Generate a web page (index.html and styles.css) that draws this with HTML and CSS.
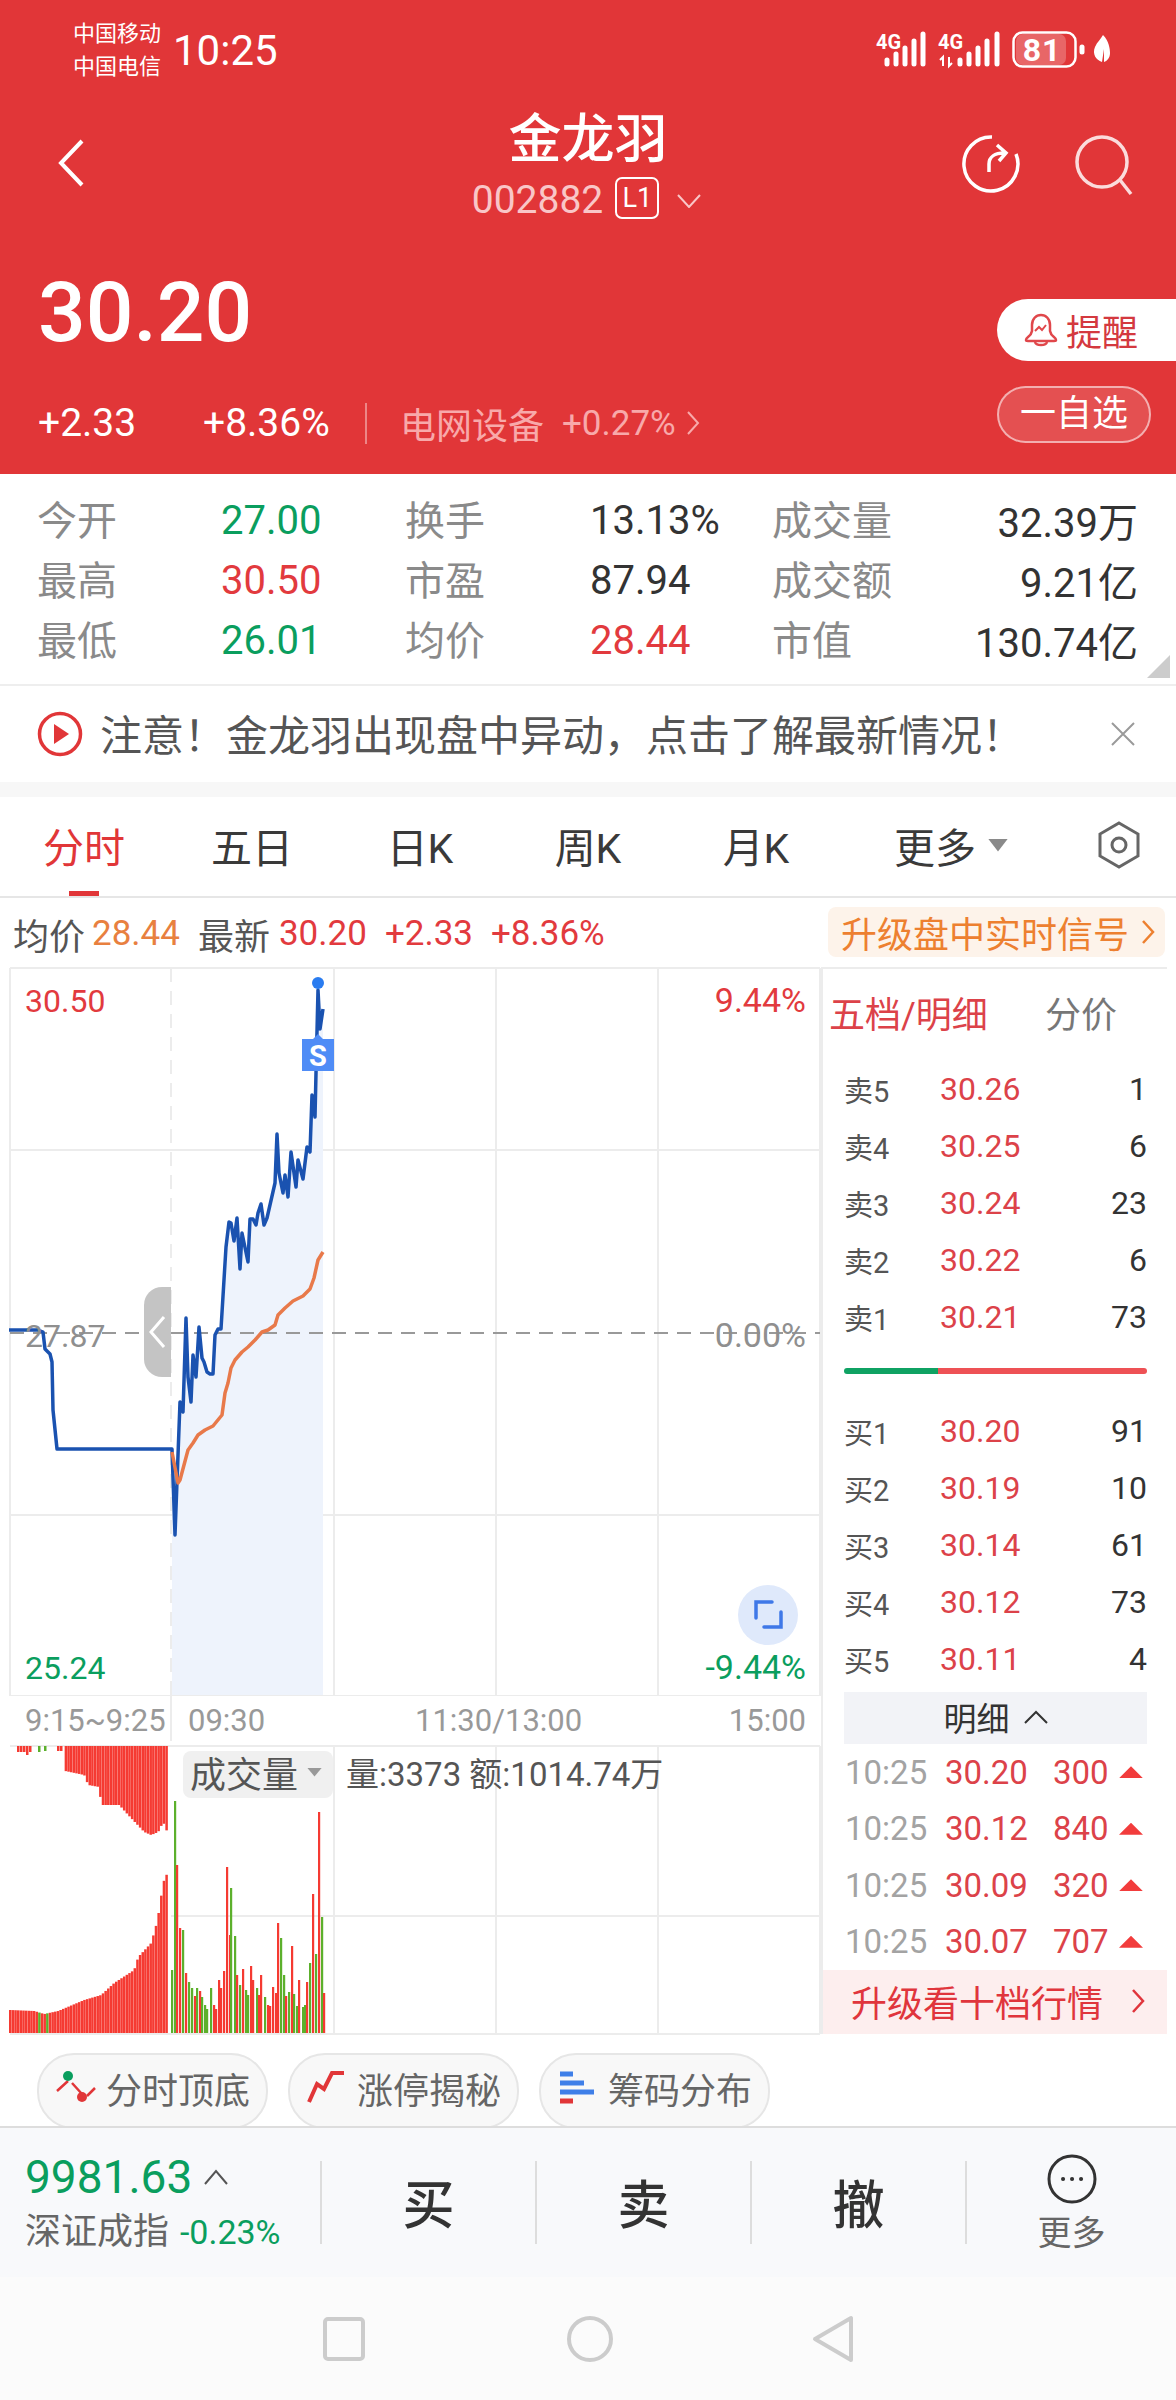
FILE: index.html
```html
<!DOCTYPE html>
<html lang="zh-CN">
<head>
    <meta charset="UTF-8">
    <meta name="viewport" content="width=device-width, initial-scale=1.0">
    <title>金龙羽 002882</title>
    <link rel="stylesheet" href="styles.css">
</head>
<body>
    <header class="head">
        <div class="status">
            <div class="carriers">中国移动<br>中国电信</div>
            <div class="clock">10:25</div>
            <svg class="status-icons" width="245" height="48" viewBox="870 26 245 48">
                <text class="net" x="876" y="49">4G</text>
                <path class="sig" d="M887 60v4M896 54v10M905 48v16M914 41v23M923 34v30"/>
                <text class="net" x="938" y="49">4G</text>
                <path class="arrows" d="M943 66v-9l-3 3M949 57v9l3-3"/>
                <path class="sig" d="M960 60v4M969 54v10M978 48v16M987 41v23M997 34v30"/>
                <rect x="1016" y="34" width="50" height="31" rx="7" fill="#fff" fill-opacity=".24"/>
                <rect x="1013.5" y="32.5" width="62" height="34" rx="9" fill="none" stroke="#fff" stroke-width="2.5"/>
                <text class="batt" x="1042" y="61">81</text>
                <path class="sig" d="M1082 47v5"/>
                <path d="M1103 35c6 6 7 14 7 18 0 5-3 8-6 9v-13l-2 13c-6-2-10-8-7-15 2-5 6-8 8-12z" fill="#fff"/>
            </svg>
        </div>
        <div class="titlebar">
            <svg class="back" width="30" height="50" viewBox="0 0 30 50"><path d="M26 3L5 25l21 22"/></svg>
            <div class="name">
                <h1>金龙羽</h1>
                <div class="code">
                    <span>002882</span>
                    <span class="level">L1</span>
                    <svg width="24" height="14" viewBox="0 0 24 14"><path d="M1 1l11 12L23 1"/></svg>
                </div>
            </div>
            <div class="actions">
                <svg width="60" height="60" viewBox="0 0 60 60">
                    <path d="M31 3A27 27 0 1 0 55 20"/>
                    <path d="M28 38v-8c0-7 6-11 15-11M36 11l9 8-7 8"/>
                </svg>
                <svg class="search" width="60" height="62" viewBox="0 0 60 62">
                    <circle cx="29" cy="28" r="25"/>
                    <path d="M47 46l11 14"/>
                </svg>
            </div>
        </div>
        <div class="quote">
            <div>
                <div class="price">30.20</div>
                <div class="change">
                    <span class="chg-val">+2.33</span>
                    <span class="chg-pct">+8.36%</span>
                    <span class="sector">电网设备</span>
                    <span class="sector-pct">+0.27%</span>
                    <svg width="14" height="26" viewBox="0 0 14 26"><path d="M2 2l10 11L2 24"/></svg>
                </div>
            </div>
            <div class="pills">
                <div class="pill-alert">
                    <svg width="36" height="36" viewBox="0 0 36 36">
                        <path d="M2 28c0-3 5-3 6-9v-6c0-6 4-10 9-10s9 4 9 10v6c1 6 6 6 6 9 0 1-1 1-2 1H4c-1 0-2 0-2-1z"/>
                        <path d="M11 30c1 4 11 4 12 0"/>
                        <path class="spark" d="M11 19l4-4 3 3 4-5"/>
                    </svg>
                    提醒
                </div>
                <div class="pill-watch">一自选</div>
            </div>
        </div>
    </header>

    <section class="stats">
        <span class="lbl">今开</span><span class="green">27.00</span>
        <span class="lbl">换手</span><span>13.13%</span>
        <span class="lbl">成交量</span><span class="end">32.39万</span>
        <span class="lbl">最高</span><span class="red">30.50</span>
        <span class="lbl">市盈</span><span>87.94</span>
        <span class="lbl">成交额</span><span class="end">9.21亿</span>
        <span class="lbl">最低</span><span class="green">26.01</span>
        <span class="lbl">均价</span><span class="red">28.44</span>
        <span class="lbl">市值</span><span class="end">130.74亿</span>
        <i class="corner"></i>
    </section>

    <section class="notice">
        <svg width="46" height="46" viewBox="0 0 46 46">
            <circle cx="23" cy="23" r="20.5" fill="none" stroke="#e13638" stroke-width="3.5"/>
            <path d="M17 13l15 10-15 10z" fill="#e13638"/>
        </svg>
        <span>注意！金龙羽出现盘中异动，点击了解最新情况！</span>
        <svg class="close" width="26" height="26" viewBox="0 0 26 26"><path d="M2 2l22 22M24 2L2 24"/></svg>
    </section>
    <div class="band"></div>

    <nav class="tabs">
        <a class="on">分时</a>
        <a>五日</a>
        <a>日K</a>
        <a>周K</a>
        <a>月K</a>
        <a>更多<i class="caret"></i></a>
        <a>
            <svg width="44" height="48" viewBox="0 0 44 48">
                <path d="M22 2l19 11v22L22 46 3 35V13z"/>
                <circle cx="22" cy="24" r="7"/>
            </svg>
        </a>
    </nav>

    <div class="ticker">
        <span class="gray">均价</span><span class="orange">28.44</span>
        <span class="gray next">最新</span><span class="red last">30.20</span>
        <span class="red next">+2.33</span>
        <span class="red next">+8.36%</span>
        <div class="promo">
            升级盘中实时信号
            <svg width="14" height="26" viewBox="0 0 14 26"><path d="M2 2l10 11L2 24"/></svg>
        </div>
    </div>

    <main class="market">
        <div class="charts">
            <svg class="pane" width="812" height="729" viewBox="9 967 812 729">
                <path class="grid" d="M10 968H820M10 968V1696M10 1150H820M10 1515H820M10 1696H820M334 968V1696M496 968V1696M658 968V1696M820 968V1696"/>
                <path class="grid dash" d="M171 968V1696"/>

                <path class="area" d="M172 1452L175 1535L180 1402L183 1412L186 1318L188 1377L191 1402L193 1355L196 1377L199 1327L202 1358L204 1362L207 1372L210 1374L213 1374L215 1335L218 1329L221 1329L226 1247L229 1222L231 1223L234 1241L237 1218L240 1269L242 1233L248 1262L250 1219L253 1219L256 1225L258 1213L261 1204L264 1225L267 1218L275 1183L277 1134L279 1173L283 1193L285 1175L288 1197L291 1152L296 1187L298 1160L303 1179L307 1147L310 1152L312 1095L315 1117L316 1073L318 990L320 1029L323 1009V1695H172Z"/>
                <path class="mid" d="M10 1333H820"/>
                <path class="line-price" d="M9 1330H38L43 1332L45 1349L50 1354L52 1362L53 1410L57 1449H172L175 1535L180 1402L183 1412L186 1318L188 1377L191 1402L193 1355L196 1377L199 1327L202 1358L204 1362L207 1372L210 1374L213 1374L215 1335L218 1329L221 1329L226 1247L229 1222L231 1223L234 1241L237 1218L240 1269L242 1233L248 1262L250 1219L253 1219L256 1225L258 1213L261 1204L264 1225L267 1218L275 1183L277 1134L279 1173L283 1193L285 1175L288 1197L291 1152L296 1187L298 1160L303 1179L307 1147L310 1152L312 1095L315 1117L316 1073L318 990L320 1029L323 1009"/>
                <path class="line-avg" d="M172 1452L178 1483L180 1480L188 1450L193 1443L198 1435L205 1430L213 1426L222 1415L225 1393L228 1383L231 1368L235 1360L242 1352L248 1347L255 1340L262 1332L268 1330L275 1325L278 1315L285 1308L293 1301L303 1296L310 1289L314 1278L318 1260L323 1252"/>
                <circle cx="318" cy="983" r="6" fill="#2a7cf0"/>
                <path d="M302 1039H313L318 1034L323 1039H334V1071H302Z" fill="#4f8cf6"/>
                <text class="tag" x="318" y="1066">S</text>

                <path d="M171 1287h-9a18 18 0 0 0-18 18v54a18 18 0 0 0 18 18h9z" fill="#c4c4c4"/>
                <path d="M164 1317l-13 15 13 15" fill="none" stroke="#fff" stroke-width="3"/>

                <text class="num" x="25" y="1012" fill="#e23a3e">30.50</text>
                <text class="num pct" x="806" y="1012" text-anchor="end" fill="#e23a3e">9.44%</text>
                <text class="num" x="25" y="1347" fill="#8f8f8f">27.87</text>
                <text class="num pct" x="806" y="1347" text-anchor="end" fill="#8f8f8f">0.00%</text>
                <text class="num" x="25" y="1679" fill="#0a9e5e">25.24</text>
                <text class="num pct" x="806" y="1679" text-anchor="end" fill="#0a9e5e">-9.44%</text>

                <circle cx="768" cy="1615" r="30" fill="#dfe9fb"/>
                <path d="M756 1618v-16h16M781 1612v15h-17" fill="none" stroke="#3f78e8" stroke-width="3.5" stroke-linecap="round"/>
            </svg>
            <div class="axis">
                <span>9:15~9:25</span>
                <span>09:30</span>
                <span>11:30/13:00</span>
                <span>15:00</span>
            </div>
            <div class="vol">
                <svg id="volume" class="pane" width="812" height="290" viewBox="9 1745 812 290">
                    <path class="grid" d="M10 1746H820M334 1746V2034M496 1746V2034M658 1746V2034M820 1746V2034M171 1916H820M10 2034H820"/>
                </svg>
                <div class="vol-chip">成交量<i class="caret"></i></div>
                <div class="vol-info">量:3373 额:1014.74万</div>
            </div>
        </div>

        <aside class="depth">
            <div class="depth-head"><span class="active">五档/明细</span><span>分价</span></div>
            <div class="lvl"><span>卖5</span><b>30.26</b><em>1</em></div>
            <div class="lvl"><span>卖4</span><b>30.25</b><em>6</em></div>
            <div class="lvl"><span>卖3</span><b>30.24</b><em>23</em></div>
            <div class="lvl"><span>卖2</span><b>30.22</b><em>6</em></div>
            <div class="lvl"><span>卖1</span><b>30.21</b><em>73</em></div>
            <div class="ratio"><i></i></div>
            <div class="lvl"><span>买1</span><b>30.20</b><em>91</em></div>
            <div class="lvl"><span>买2</span><b>30.19</b><em>10</em></div>
            <div class="lvl"><span>买3</span><b>30.14</b><em>61</em></div>
            <div class="lvl"><span>买4</span><b>30.12</b><em>73</em></div>
            <div class="lvl"><span>买5</span><b>30.11</b><em>4</em></div>
            <div class="detail-toggle">
                明细
                <svg width="24" height="14" viewBox="0 0 24 14"><path d="M1 13L12 2l11 11"/></svg>
            </div>
            <div class="tick"><span>10:25</span><b>30.20</b><b>300</b><i></i></div>
            <div class="tick"><span>10:25</span><b>30.12</b><b>840</b><i></i></div>
            <div class="tick"><span>10:25</span><b>30.09</b><b>320</b><i></i></div>
            <div class="tick"><span>10:25</span><b>30.07</b><b>707</b><i></i></div>
            <div class="upgrade">
                升级看十档行情
                <svg width="14" height="26" viewBox="0 0 14 26"><path d="M2 2l10 11L2 24"/></svg>
            </div>
        </aside>
    </main>

    <div class="chips">
        <div class="chip">
            <svg width="42" height="36" viewBox="54 2074 42 36">
                <path d="M56 2095l11-10M71 2087l10 11M86 2100l8-8" fill="none" stroke="#e13638" stroke-width="2.5"/>
                <circle cx="67" cy="2080" r="5" fill="#0a9e5e"/>
                <circle cx="81" cy="2101" r="5" fill="#e13638"/>
            </svg>
            分时顶底
        </div>
        <div class="chip">
            <svg width="42" height="36" viewBox="308 2074 42 36">
                <path d="M311 2106l8-18 7 5 8-16h12" fill="none" stroke="#e13638" stroke-width="4"/>
            </svg>
            涨停揭秘
        </div>
        <div class="chip">
            <svg width="42" height="36" viewBox="558 2074 42 36">
                <path d="M561 2078h13M561 2087h24M561 2096h34" stroke="#3f7fe8" stroke-width="5"/>
                <path d="M561 2105h13" stroke="#e13638" stroke-width="5"/>
            </svg>
            筹码分布
        </div>
    </div>

    <div class="toolbar">
        <div class="index">
            <div class="index-val">
                9981.63
                <svg width="24" height="16" viewBox="0 0 24 16"><path d="M1 15L12 2l11 13"/></svg>
            </div>
            <div class="index-name">深证成指 <span>-0.23%</span></div>
        </div>
        <div class="trade">买</div>
        <div class="trade">卖</div>
        <div class="trade">撤</div>
        <div class="trade more">
            <svg width="50" height="50" viewBox="0 0 50 50">
                <circle cx="25" cy="25" r="23"/>
                <path class="dots" d="M16 25h.1M25 25h.1M34 25h.1"/>
            </svg>
            <span>更多</span>
        </div>
    </div>

    <div class="sysnav">
        <svg width="42" height="44" viewBox="0 0 42 44"><rect x="2" y="2" width="38" height="40" rx="3"/></svg>
        <svg width="46" height="46" viewBox="0 0 46 46"><circle cx="23" cy="23" r="21"/></svg>
        <svg class="sys-back" width="42" height="48" viewBox="0 0 42 48"><path d="M39 3v42L3 24z"/></svg>
    </div>

    <script src="chart.js"></script>
</body>
</html>
```

FILE: styles.css
```css
* {
    box-sizing: border-box;
}
body {
    margin: 0;
    width: 1176px;
    height: 2400px;
    overflow: hidden;
    background: #fff;
    color: #333;
    font-family: Roboto, "Noto Sans CJK SC", sans-serif;
}
svg {
    display: block;
    flex: none;
}
i, em {
    font-style: normal;
}
.red { color: #e23a3e; }
.green { color: #0a9e5e; }
.orange { color: #e8803f; }
.gray { color: #555; }

/* red header */
.head {
    height: 474px;
    background: #e13638;
    color: #fff;
}
.status {
    display: flex;
    align-items: center;
    height: 100px;
    padding: 0 61px 0 73px;
}
.carriers {
    font-size: 22px;
    line-height: 33px;
    width: 100px;
}
.clock {
    font-size: 42px;
}
.status-icons {
    margin-left: auto;
}
.net {
    font-size: 20px;
    font-weight: 700;
    fill: #fff;
}
.sig {
    fill: none;
    stroke: #fff;
    stroke-width: 5;
    stroke-linecap: round;
}
.arrows {
    fill: none;
    stroke: #fff;
    stroke-width: 2;
}
.batt {
    font-size: 32px;
    font-weight: 700;
    fill: #fff;
    text-anchor: middle;
    letter-spacing: 1px;
}
.titlebar {
    display: grid;
    grid-template-columns: 1fr auto 1fr;
    align-items: center;
    height: 125px;
    padding: 0 43px;
}
.back {
    margin-left: 13px;
}
.back path {
    fill: none;
    stroke: #fff;
    stroke-width: 4;
}
.name {
    text-align: center;
    padding-top: 4px;
}
.name h1 {
    margin: 0;
    font-size: 53px;
    line-height: 66px;
    font-weight: 500;
}
.code {
    display: flex;
    align-items: center;
    gap: 12px;
    margin-left: -3px;
    font-size: 39px;
    line-height: 44px;
    color: #f9c6c7;
}
.code span:first-child {
    padding-top: 5px;
}
.level {
    border: 2px solid #fff;
    border-radius: 7px;
    width: 44px;
    height: 42px;
    font-size: 27px;
    line-height: 38px;
    text-align: center;
    color: #fff;
}
.code svg {
    margin: 6px 0 0 6px;
}
.code svg path {
    fill: none;
    stroke: #f9c6c7;
    stroke-width: 2;
}
.actions {
    display: flex;
    justify-content: flex-end;
    gap: 52px;
    padding-top: 4px;
}
.actions svg {
    fill: none;
    stroke: #fff;
    stroke-width: 3.5;
}
.actions .search {
    stroke: #fbdcdc;
}
.quote {
    display: flex;
    justify-content: space-between;
    padding-left: 38px;
}
.price {
    margin-top: 43px;
    font-size: 84px;
    line-height: 90px;
    font-weight: 500;
}
.change {
    display: flex;
    align-items: center;
    margin-top: 45px;
    height: 40px;
    font-size: 39px;
}
.chg-val {
    width: 165px;
}
.chg-pct {
    width: 164px;
    height: 41px;
    line-height: 41px;
    border-right: 2px solid rgba(255, 255, 255, .4);
}
.sector {
    margin-left: 33px;
    font-size: 36px;
    color: #f8a9aa;
}
.sector-pct {
    margin-left: 18px;
    margin-right: 10px;
    font-size: 35px;
    color: #f8a9aa;
}
.change svg path {
    fill: none;
    stroke: #f8a9aa;
    stroke-width: 2;
}
.pills {
    width: 179px;
    padding-top: 74px;
}
.pill-alert {
    display: flex;
    align-items: center;
    gap: 6px;
    height: 62px;
    padding-left: 27px;
    border-radius: 31px 0 0 31px;
    background: #fff;
    color: #d4393f;
    font-size: 36px;
}
.pill-alert svg {
    fill: none;
    stroke: #e0474b;
    stroke-width: 2.5;
}
.pill-alert .spark {
    stroke-width: 2;
}
.pill-watch {
    width: 154px;
    height: 57px;
    margin-top: 25px;
    border: 2px solid rgba(255, 255, 255, .55);
    border-radius: 29px;
    background: rgba(255, 255, 255, .13);
    text-align: center;
    line-height: 52px;
    font-size: 36px;
}

/* day stats */
.stats {
    position: relative;
    display: grid;
    grid-template-columns: 184px 184px 185px 182px 150px 216px;
    grid-auto-rows: 60px;
    align-items: center;
    height: 210px;
    padding: 16px 0 0 37px;
    font-size: 40px;
}
.stats .lbl {
    padding-bottom: 5px;
    font-size: 40px;
    color: #8a8a8a;
}
.stats .end {
    text-align: right;
}
.corner {
    position: absolute;
    right: 6px;
    bottom: 6px;
    width: 23px;
    height: 23px;
    background: #ccc;
    clip-path: polygon(100% 0, 100% 100%, 0 100%);
}
.notice {
    display: flex;
    align-items: center;
    gap: 17px;
    height: 98px;
    padding: 0 40px 0 37px;
    border-top: 2px solid #eee;
    font-size: 42px;
    color: #555;
}
.notice span {
    padding-bottom: 3px;
}
.close {
    margin-left: auto;
    fill: none;
    stroke: #9a9a9a;
    stroke-width: 2;
}
.band {
    height: 15px;
    background: #f7f7f7;
}

/* period tabs */
.tabs {
    display: grid;
    grid-template-columns: repeat(5, 168px) 222px 114px;
    height: 101px;
    border-bottom: 2px solid #e6e6e6;
    font-size: 41px;
    color: #3a3a3a;
}
.tabs a {
    position: relative;
    display: flex;
    align-items: center;
    justify-content: center;
    height: 99px;
    padding-bottom: 3px;
}
.tabs .on {
    color: #e13638;
}
.tabs .on::after {
    content: "";
    position: absolute;
    left: 69px;
    bottom: 0;
    width: 30px;
    height: 5px;
    background: #e13638;
}
.caret {
    display: inline-block;
    width: 20px;
    height: 13px;
    margin-left: 12px;
    background: #8a8a8a;
    clip-path: polygon(0 0, 100% 0, 50% 100%);
}
.tabs svg {
    fill: none;
    stroke: #666;
    stroke-width: 3;
}
.ticker {
    display: flex;
    align-items: center;
    height: 69px;
    padding: 2px 11px 0 13px;
    font-size: 35px;
}
.ticker .gray {
    font-size: 36px;
}
.ticker .orange, .ticker .red {
    margin-left: 7px;
}
.ticker .last {
    margin-left: 9px;
}
.ticker .next {
    margin-left: 18px;
}
.promo {
    display: flex;
    align-items: center;
    gap: 12px;
    height: 50px;
    margin-top: -4px;
    margin-left: auto;
    padding: 0 10px 0 13px;
    border-radius: 8px;
    background: #fdf3ea;
    color: #ed8030;
    font-size: 36px;
}
.promo path, .upgrade path {
    fill: none;
    stroke: currentColor;
    stroke-width: 2.5;
}

/* chart column and order book */
.market {
    display: flex;
    height: 1067px;
    padding-left: 9px;
}
.charts {
    width: 812px;
}
.grid {
    fill: none;
    stroke: #ececec;
    stroke-width: 2;
}
.grid.dash {
    stroke-dasharray: 14 9;
}
.mid {
    fill: none;
    stroke: #999;
    stroke-width: 2;
    stroke-dasharray: 14 9;
}
.area {
    fill: #eef3fc;
}
.line-price {
    fill: none;
    stroke: #1a52b0;
    stroke-width: 3.5;
    stroke-linejoin: round;
}
.line-avg {
    fill: none;
    stroke: #e8794a;
    stroke-width: 3.5;
    stroke-linejoin: round;
}
.tag {
    font-size: 29px;
    font-weight: 700;
    fill: #fff;
    text-anchor: middle;
}
.num {
    font-size: 32px;
}
.pct {
    font-size: 34px;
}
.axis {
    position: relative;
    display: grid;
    grid-template-columns: 163px 227px 1fr auto;
    align-items: center;
    height: 49px;
    padding: 0 15px 0 16px;
    font-size: 31px;
    color: #999;
}
.axis::after {
    content: "";
    position: absolute;
    left: 161px;
    top: 0;
    bottom: 4px;
    width: 2px;
    background: #ececec;
}
.vol {
    position: relative;
}
.vol-chip {
    position: absolute;
    left: 174px;
    top: 6px;
    display: flex;
    align-items: center;
    width: 150px;
    height: 47px;
    padding: 0 0 5px 7px;
    border-radius: 8px;
    background: #f0f0f0;
    color: #555;
    font-size: 36px;
}
.vol-chip .caret {
    width: 15px;
    height: 9px;
    margin-left: 9px;
    background: #999;
}
.vol-info {
    position: absolute;
    left: 337px;
    top: 10px;
    color: #555;
    font-size: 33px;
    line-height: 40px;
}
.depth {
    display: flex;
    flex-direction: column;
    width: 346px;
    border-left: 2px solid #ececec;
    border-top: 2px solid #ececec;
}
.depth-head {
    display: flex;
    justify-content: space-between;
    align-items: center;
    height: 91px;
    padding: 0 50px 5px 6px;
    font-size: 36px;
    color: #777;
}
.depth-head .active {
    color: #dc4249;
}
.lvl {
    display: grid;
    grid-template-columns: 96px 1fr auto;
    align-items: center;
    height: 57px;
    padding: 0 20px 0 21px;
    font-size: 32px;
}
.lvl span {
    font-size: 29px;
    color: #555;
}
.lvl b, .tick b {
    font-weight: 400;
    color: #dc4249;
}
.ratio {
    height: 57px;
    padding: 23px 20px 0 21px;
}
.ratio i {
    display: block;
    height: 6px;
    border-radius: 3px;
    background: linear-gradient(90deg, #0fa263 31%, #ee5155 31%);
}
.detail-toggle {
    display: flex;
    align-items: center;
    justify-content: center;
    gap: 14px;
    height: 52px;
    margin: 5px 20px 0 21px;
    padding-bottom: 3px;
    background: #f2f3f7;
    font-size: 33px;
}
.detail-toggle path {
    fill: none;
    stroke: #333;
    stroke-width: 2;
}
.tick {
    display: grid;
    grid-template-columns: 100px 108px 66px 24px;
    align-items: center;
    height: 56.5px;
    padding-left: 22px;
    font-size: 33px;
}
.tick span {
    color: #a3a3a3;
}
.tick i {
    width: 24px;
    height: 12px;
    background: #f23c3c;
    clip-path: polygon(50% 0, 100% 100%, 0 100%);
}
.upgrade {
    display: flex;
    align-items: center;
    justify-content: space-between;
    flex: 1;
    padding: 0 22px 2px 28px;
    background: #fdeeee;
    color: #e0353c;
    font-size: 36px;
}

/* shortcut chips */
.chips {
    display: flex;
    gap: 20px;
    height: 94px;
    padding: 19px 0 0 37px;
    border-bottom: 2px solid #ddd;
    overflow: hidden;
}
.chip {
    display: flex;
    align-items: center;
    gap: 9px;
    width: 231px;
    height: 76px;
    padding: 0 0 7px 16px;
    border: 2px solid #e6e6e6;
    border-radius: 37px;
    background: #f8f8f8;
    color: #666;
    font-size: 36px;
}

/* bottom trading bar */
.toolbar {
    display: grid;
    grid-template-columns: 320px 215px 215px 215px 211px;
    align-items: center;
    height: 149px;
    background: #f8f9fb;
}
.index {
    padding-left: 25px;
}
.index-val {
    display: flex;
    align-items: center;
    gap: 12px;
    color: #0a9e5e;
    font-size: 46px;
    line-height: 54px;
}
.index-val svg {
    fill: none;
    stroke: #555;
    stroke-width: 2;
}
.index-name {
    margin-top: 4px;
    font-size: 36px;
    line-height: 48px;
    color: #666;
}
.index-name span {
    margin-left: 2px;
    font-size: 34px;
    color: #0a9e5e;
}
.trade {
    display: flex;
    flex-direction: column;
    align-items: center;
    justify-content: center;
    height: 83px;
    padding-bottom: 2px;
    border-left: 2px solid #ddd;
    color: #333;
    font-size: 52px;
    font-weight: 500;
}
.more {
    font-size: 34px;
    font-weight: 400;
    color: #666;
    padding-bottom: 0;
}
.more svg {
    fill: none;
    stroke: #333;
    stroke-width: 3;
}
.more .dots {
    stroke-width: 4;
    stroke-linecap: round;
}
.more span {
    margin-top: 10px;
    line-height: 38px;
}
.sysnav {
    display: flex;
    align-items: center;
    justify-content: center;
    gap: 202px;
    height: 123px;
    background: #fbfbfb;
}
.sysnav svg {
    fill: none;
    stroke: #ccc;
    stroke-width: 4;
    stroke-linejoin: round;
}
.sysnav .sys-back {
    margin-left: -3px;
}
```

FILE: chart.js
```js
// volume bars, heights are read as bar-top y values in page coordinates
const volume = document.getElementById('volume');
const BOTTOM = 2033;
const TOP = 1746;
const RED = '#f53a32';
const GREEN = '#5cb02c';

function addBar(x, y, h, color, w) {
    const r = document.createElementNS('http://www.w3.org/2000/svg', 'rect');
    r.setAttribute('x', x);
    r.setAttribute('y', y);
    r.setAttribute('width', w);
    r.setAttribute('height', h);
    r.setAttribute('fill', color);
    volume.appendChild(r);
}

// straight-line lookup through [x, y] control points
function lookup(points, x) {
    for (let i = 1; i < points.length; i++) {
        if (x <= points[i][0]) {
            const [x0, y0] = points[i - 1];
            const [x1, y1] = points[i];
            return y0 + (y1 - y0) * (x - x0) / (x1 - x0);
        }
    }
    return points[points.length - 1][1];
}

// call auction: buy side grows up from the bottom, imbalance hangs from the top
const auctionBottom = [[9, 2010], [33, 2011], [43, 2014], [57, 2011], [83, 2000], [100, 1995], [113, 1983], [133, 1970], [137, 1957], [150, 1943], [155, 1925], [158, 1910], [162, 1882], [165, 1877], [168, 1858]];
const auctionTop = [[64, 1771], [83, 1775], [87, 1785], [98, 1787], [100, 1805], [118, 1805], [127, 1815], [143, 1832], [150, 1835], [157, 1832], [162, 1822], [168, 1837]];

for (let x = 9; x < 168; x += 2.65) {
    const green = x > 37 && x < 52 && Math.round(x) % 2 === 0;
    const top = lookup(auctionBottom, x);
    addBar(x, top, BOTTOM - top, green ? GREEN : RED, 2.5);
    if (x >= 64) {
        addBar(x, TOP, lookup(auctionTop, x) - TOP, RED, 2.5);
    }
}
[[17, 6], [20, 6], [23, 6], [26, 9], [29, 6]].forEach(([x, h]) => addBar(x, TOP, h, RED, 2.5));
[[38, 6], [44, 5]].forEach(([x, h]) => addBar(x, TOP, h, GREEN, 2.5));
[[57, 5], [60, 5]].forEach(([x, h]) => addBar(x, TOP, h, RED, 2.5));

// continuous session, one bar per minute: [x, top y, is green]
const session = [
    [171, 1970, 1], [174, 1801, 1], [176, 1865, 0], [179, 1928, 0], [182, 1930, 1], [185, 1973, 0],
    [188, 1982, 1], [191, 1988, 1], [194, 1996, 0], [196, 1988, 1], [199, 1991, 0], [201, 1997, 1],
    [204, 2005, 1], [206, 2009, 1], [210, 1988, 1], [213, 2005, 0], [215, 2009, 0], [218, 1980, 0],
    [220, 1988, 0], [223, 1971, 0], [226, 1867, 0], [229, 1935, 0], [230, 1888, 1], [234, 1936, 1],
    [236, 1975, 0], [239, 1985, 1], [242, 1969, 0], [245, 1990, 1], [247, 1995, 1], [250, 1966, 0],
    [252, 1980, 0], [256, 1988, 1], [258, 1995, 0], [260, 1975, 0], [264, 1997, 1], [267, 2005, 0],
    [269, 2006, 0], [272, 1987, 0], [275, 1993, 0], [277, 1923, 0], [280, 1938, 1], [283, 1975, 1],
    [285, 1996, 0], [288, 1992, 1], [291, 1946, 0], [293, 1994, 1], [296, 2006, 1], [298, 1980, 0],
    [302, 2007, 1], [304, 2005, 1], [306, 1982, 0], [309, 1963, 1], [312, 1894, 0], [315, 1954, 1],
    [318, 1812, 0], [321, 1917, 1], [323, 1993, 0]
];
session.forEach(([x, top, green]) => addBar(x, top, BOTTOM - top, green ? GREEN : RED, 2.2));
```
